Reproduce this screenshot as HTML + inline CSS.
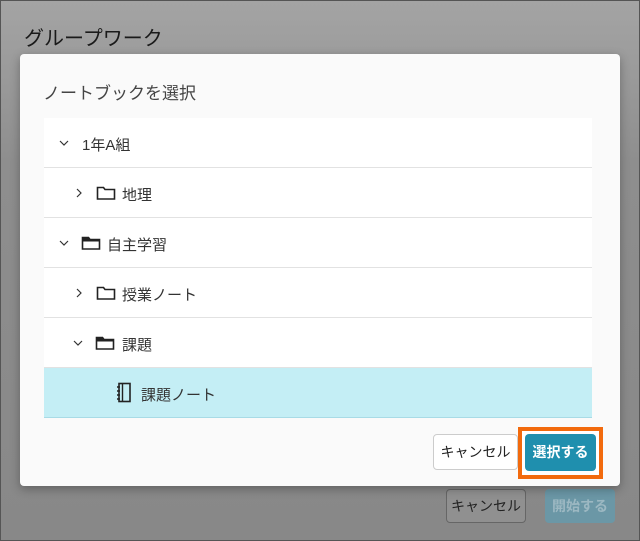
<!DOCTYPE html>
<html><head><meta charset="utf-8"><style>
*{box-sizing:border-box;margin:0;padding:0}
body{width:640px;height:541px;overflow:hidden;background:#8c8c8c;font-family:"Liberation Sans","Noto Sans CJK JP",sans-serif;position:relative;color:#333}
.bg{position:absolute;inset:0;background:linear-gradient(#a4a4a4,#8e8e8e 30%,#888 100%);border:1px solid #555}
.title{position:absolute;left:24px;top:22px;font-size:20px;color:#1a1a1a}
.b1{position:absolute;left:446px;top:489px;width:80px;height:34px;border:1px solid #666;border-radius:4px;font-size:14px;color:#222;text-align:center;line-height:32px;background:#909090}
.b2{position:absolute;left:545px;top:489px;width:70px;height:34px;border-radius:4px;font-size:14px;color:#9cb8c2;text-align:center;line-height:34px;background:#6b97a6;font-weight:bold}
.dlg{position:absolute;left:20px;top:54px;width:600px;height:432px;background:#fafafa;border-radius:4px;box-shadow:0 3px 10px rgba(0,0,0,.3)}
.h{position:absolute;left:23px;top:25px;font-size:17px;color:#444}
.tree{position:absolute;left:24px;top:64px;width:548px;height:300px;background:#fff}
.row{height:50px;border-bottom:1px solid #e2e2e2;position:relative;font-size:15px;color:#333}
.row span{position:absolute;top:16px}
.row svg{position:absolute}
.sel{background:#c4eef5;border-bottom:1px solid #a8dbe6}
.c{position:absolute;left:413px;top:380px;width:85px;height:36px;border:1px solid #ccc;border-radius:4px;background:#fff;font-size:14px;text-align:center;line-height:34px;color:#222}
.o{position:absolute;left:498px;top:373px;width:85px;height:52px;border:4px solid #f26a0d;background:#fff}
.s{position:absolute;left:505px;top:380px;width:71px;height:37px;border-radius:4px;background:#1f8fae;color:#fff;font-size:14px;font-weight:bold;text-align:center;line-height:37px}
</style></head><body>
<div class="bg"></div>
<div class="title">グループワーク</div>
<div class="b1">キャンセル</div>
<div class="b2">開始する</div>
<div class="dlg">
<div class="h">ノートブックを選択</div>
<div class="tree">
<div class="row"><svg style="left:14px;top:20px" width="12" height="10"><path d="M2 3l4 4 4-4" stroke="#333" stroke-width="1.2" fill="none"/></svg><span style="left:38px">1年A組</span></div>
<div class="row"><svg style="left:30px;top:19px" width="10" height="12"><path d="M3 2l4 4-4 4" stroke="#333" stroke-width="1.2" fill="none"/></svg><svg style="left:52px;top:17px" width="20" height="16"><path d="M1.5 2.5h6l1.5 2h9.5v9.5h-17z" stroke="#222" stroke-width="1.6" fill="none"/></svg><span style="left:78px">地理</span></div>
<div class="row"><svg style="left:14px;top:20px" width="12" height="10"><path d="M2 3l4 4 4-4" stroke="#333" stroke-width="1.2" fill="none"/></svg><svg style="left:37px;top:17px" width="20" height="16"><path d="M1.5 2.5h6l1.5 2h9.5v9.5h-17z" stroke="#222" stroke-width="1.6" fill="none"/><path d="M1.5 2.5h6l1.5 2h9.5v2h-17z" fill="#222"/></svg><span style="left:63px">自主学習</span></div>
<div class="row"><svg style="left:30px;top:19px" width="10" height="12"><path d="M3 2l4 4-4 4" stroke="#333" stroke-width="1.2" fill="none"/></svg><svg style="left:52px;top:17px" width="20" height="16"><path d="M1.5 2.5h6l1.5 2h9.5v9.5h-17z" stroke="#222" stroke-width="1.6" fill="none"/></svg><span style="left:78px">授業ノート</span></div>
<div class="row"><svg style="left:28px;top:20px" width="12" height="10"><path d="M2 3l4 4 4-4" stroke="#333" stroke-width="1.2" fill="none"/></svg><svg style="left:51px;top:17px" width="20" height="16"><path d="M1.5 2.5h6l1.5 2h9.5v9.5h-17z" stroke="#222" stroke-width="1.6" fill="none"/><path d="M1.5 2.5h6l1.5 2h9.5v2h-17z" fill="#222"/></svg><span style="left:78px">課題</span></div>
<div class="row sel"><svg style="left:72px;top:14px" width="16" height="22"><rect x="3" y="1.5" width="11" height="18" stroke="#222" stroke-width="1.6" fill="none"/><path d="M6.5 2v17M1 5h3M1 9h3M1 13h3M1 17h3" stroke="#222" stroke-width="1.4"/></svg><span style="left:97px">課題ノート</span></div>
</div>
<div class="c">キャンセル</div>
<div class="o"></div>
<div class="s">選択する</div>
</div>
</body></html>
